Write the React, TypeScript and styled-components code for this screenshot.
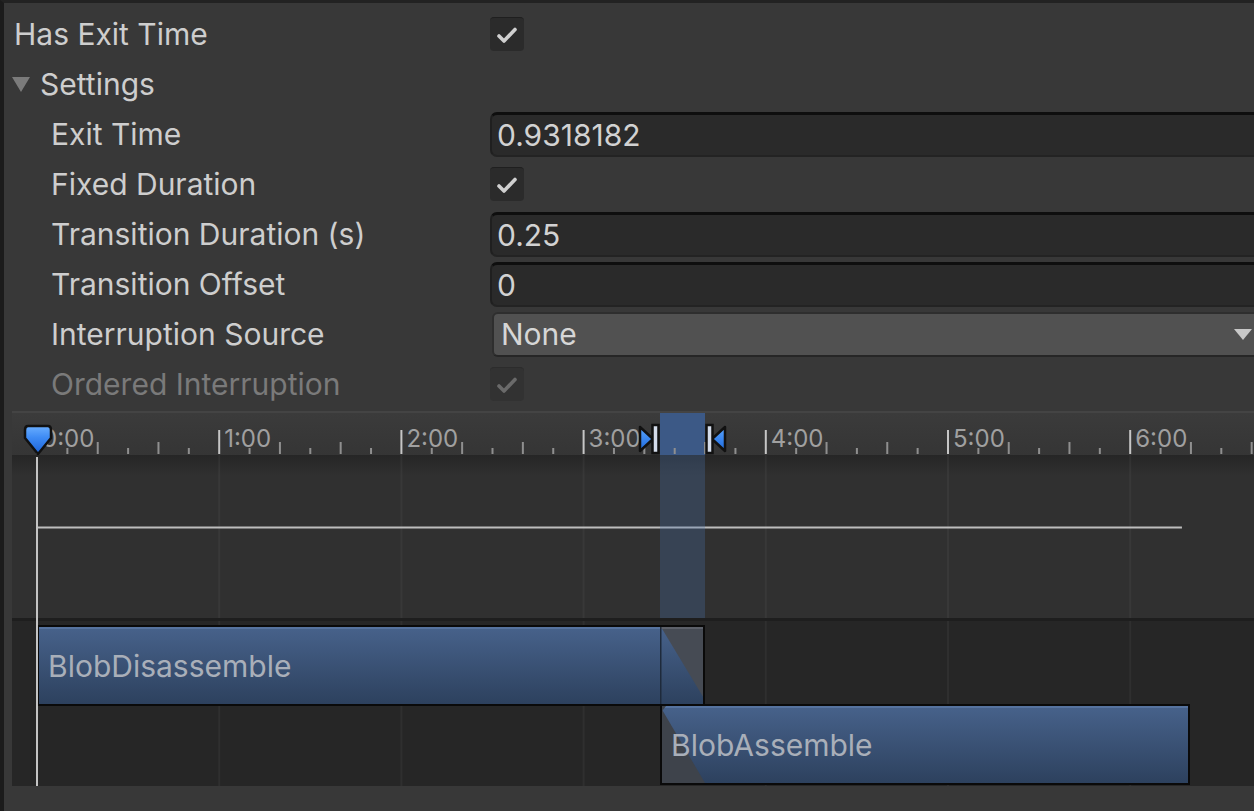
import React from 'react';
import styled, { createGlobalStyle } from 'styled-components';

const GlobalStyle = createGlobalStyle`
  html, body {
    margin: 0;
    padding: 0;
    background: #383838;
    overflow: hidden;
  }
  body {
    font-family: Inter, "Noto Sans", "Liberation Sans", sans-serif;
  }
`;

// Timeline scale: one ruler unit ("1:00") in pixels, and where 0:00 sits in the panel.
const UNIT = 182.2;
const ORIGIN = 25;
const toX = (t: number) => ORIGIN + t * UNIT;

const TRANSITION = { start: 3.42, end: 3.667 };

const CLIPS = [
    { name: 'BlobDisassemble', start: 0, end: 3.667, lane: 0 },
    { name: 'BlobAssemble', start: 3.42, end: 6.33, lane: 1 },
];

const CURVE_END = 6.284;
const MAJOR_TICKS = [0, 1, 2, 3, 4, 5, 6, 7];
const LABELS = [0, 1, 2, 3, 4, 5, 6];

const Window = styled.div`
    width: 1254px;
    height: 811px;
    box-sizing: border-box;
    border-top: 3px solid #222222;
    border-left: 4px solid #1b1b1b;
    background: #383838;
    overflow: hidden;
`;

const Content = styled.div`
    width: 1274px;
    padding-top: 6px;
`;

const Row = styled.div`
    height: 50px;
    display: grid;
    grid-template-columns: 486px 1fr;
    align-items: center;
`;

const Label = styled.div<{ $indent?: boolean; $disabled?: boolean }>`
    padding-left: ${(p) => (p.$indent ? '47px' : '10px')};
    font-size: 30px;
    line-height: 30px;
    color: ${(p) => (p.$disabled ? '#7a7a7a' : '#cecece')};
    white-space: nowrap;
`;

const Foldout = styled.div`
    display: flex;
    align-items: center;
    gap: 10px;
    padding-left: 8px;
    font-size: 30px;
    line-height: 30px;
    color: #cecece;
`;

const TextField = styled.div`
    height: 45px;
    box-sizing: border-box;
    display: flex;
    align-items: center;
    padding-left: 5px;
    background: #2a2a2a;
    border: 2px solid #1f1f1f;
    border-top: 3px solid #0e0e0e;
    border-bottom-color: #232323;
    border-radius: 7px;
    font-size: 30px;
    color: #d2d2d2;
`;

const Dropdown = styled.div`
    height: 45px;
    box-sizing: border-box;
    margin-left: 2px;
    display: flex;
    align-items: center;
    justify-content: space-between;
    padding: 0 24px 0 7px;
    background: #515151;
    border: 2px solid #2e2e2e;
    border-bottom-color: #262626;
    border-radius: 6px;
    font-size: 30px;
    color: #d6d6d6;
`;

const CheckBox = styled.div<{ $disabled?: boolean }>`
    width: 34px;
    height: 34px;
    box-sizing: border-box;
    border-radius: 4px;
    background: ${(p) => (p.$disabled ? '#323232' : '#2b2b2b')};
    border-top: 1px solid ${(p) => (p.$disabled ? '#2c2c2c' : '#1f1f1f')};
    display: flex;
    align-items: center;
    justify-content: center;
`;

const Timeline = styled.div`
    margin: 2px 0 0 8px;
    display: flex;
    flex-direction: column;
    position: relative;
    border-top: 2px solid #444444;
`;

const Ruler = styled.div`
    position: relative;
    height: 42px;
    background: linear-gradient(#3b3b3b, #353535);
`;

const CurveArea = styled.div`
    position: relative;
    height: 163px;
    background: linear-gradient(#262626, #303030 20px, #303030);
`;

const ClipArea = styled.div`
    position: relative;
    height: 168px;
    box-sizing: border-box;
    border-top: 3px solid #1e1e1e;
    background: #262626;
`;

const Layer = styled.svg`
    position: absolute;
    left: 0;
    top: 0;
`;

const TickLabel = styled.span`
    position: absolute;
    top: 14px;
    font-size: 24px;
    line-height: 23px;
    color: #a0a0a0;
`;

const RulerHighlight = styled.div`
    position: absolute;
    top: 0;
    bottom: 0;
    background: #3c5986;
`;

const CurveHighlight = styled.div`
    position: absolute;
    top: 0;
    bottom: 0;
    background: rgba(74, 112, 170, 0.3);
`;

const Marker = styled.svg`
    position: absolute;
    top: 10px;
`;

const PlayheadLine = styled.div`
    position: absolute;
    top: 44px;
    bottom: 0;
    width: 2px;
    background: #c4c4c4;
`;

const ClipBox = styled.div`
    position: absolute;
    height: 81px;
    box-sizing: border-box;
    border: 2px solid #0a0a0a;
    background: linear-gradient(#47628b, #2d415e);
    box-shadow: inset 0 2px 0 #56739f;
    overflow: hidden;
`;

const ClipName = styled.span`
    position: relative;
    z-index: 1;
    display: flex;
    align-items: center;
    height: 100%;
    padding-left: 9px;
    font-size: 30px;
    color: #a9afb9;
    white-space: nowrap;
`;

const Blend = styled.svg`
    position: absolute;
    top: 0;
`;

const Check: React.FC<{ disabled?: boolean }> = ({ disabled }) => (
    <svg width={34} height={34} viewBox='0 0 34 34'>
        <polyline points='9,18 14,23 25,11.5' fill='none'
            stroke={disabled ? '#6a6a6a' : '#d0d0d0'}
            strokeWidth={3.6} strokeLinecap='round' strokeLinejoin='round'
        />
    </svg>
);

const CheckField: React.FC<{ disabled?: boolean }> = ({ disabled }) => (
    <CheckBox $disabled={disabled}>
        <Check disabled={disabled} />
    </CheckBox>
);

const RulerTicks: React.FC = () => {
    const lines: React.ReactNode[] = [];
    MAJOR_TICKS.forEach((m) => {
        const x = toX(m);
        lines.push(<rect key={`M${m}`} x={x - 1} y={17} width={2} height={24} fill='#c6c6c6' />);
        for (let k = 1; k < 6; k++) {
            const sx = x + (k * UNIT) / 6;
            const h = k % 2 === 0 ? 12 : 6;
            lines.push(<rect key={`m${m}-${k}`} x={sx - 1} y={41 - h} width={2} height={h} fill='#8f8f8f' />);
        }
    });
    return (
        <Layer width={1300} height={42}>
            {lines}
        </Layer>
    );
};

const GridLines: React.FC<{ height: number; curve?: boolean }> = ({ height, curve }) => (
    <Layer width={1300} height={height}>
        {MAJOR_TICKS.slice(1).map((m) => (
            <rect key={m} x={toX(m) - 1} y={0} width={2} height={height} fill='rgba(255,255,255,0.045)' />
        ))}
        {curve && (
            <line x1={ORIGIN} y1={72.5} x2={toX(CURVE_END)} y2={72.5} stroke='#bdbdbd' strokeWidth={2} />
        )}
    </Layer>
);

const Playhead: React.FC = () => (
    <Marker width={32} height={34} viewBox='0 0 32 34' style={{ left: ORIGIN - 15, top: 10 }}>
        <defs>
            <linearGradient id='ph' x1='0' y1='0' x2='0' y2='1'>
                <stop offset='0' stopColor='#6aaeff' />
                <stop offset='0.4' stopColor='#3f8cf5' />
                <stop offset='1' stopColor='#1a62d6' />
            </linearGradient>
        </defs>
        <path d='M6 3 H26 Q29 3 29 7 V15 L16 31 L3 15 V7 Q3 3 6 3 Z'
            fill='url(#ph)' stroke='#111' strokeWidth={2.5} strokeLinejoin='round' />
    </Marker>
);

const TransitionMarker: React.FC<{ x: number; flip?: boolean }> = ({ x, flip }) => (
    <Marker width={24} height={32} viewBox='0 0 24 32'
        style={{ left: flip ? x - 1 : x - 23 }}>
        <defs>
            <linearGradient id='tm' x1='0' y1='0' x2='0' y2='1'>
                <stop offset='0' stopColor='#5aa5ff' />
                <stop offset='1' stopColor='#1c68dc' />
            </linearGradient>
        </defs>
        <g transform={flip ? 'translate(24 0) scale(-1 1)' : undefined}>
            <path d='M3 4 L16 16 L3 28 Z' fill='url(#tm)' stroke='#111' strokeWidth={2.5} strokeLinejoin='round' />
            <rect x={15.5} y={2} width={6} height={28} fill='#d4dcea' stroke='#111' strokeWidth={2.5} />
        </g>
    </Marker>
);

interface ClipProps {
    name: string;
    start: number;
    end: number;
    lane: number;
}

const Clip: React.FC<ClipProps> = ({ name, start, end, lane }) => {
    const left = toX(start);
    const width = toX(end) - left;
    const inner = 77;
    // Part of the clip that lies under the transition.
    const blendFrom = Math.max(start, TRANSITION.start);
    const blendTo = Math.min(end, TRANSITION.end);
    const bx = (blendFrom - start) * UNIT - 2;
    const bw = (blendTo - blendFrom) * UNIT;
    const outgoing = blendTo >= end - 0.001;

    return (
        <ClipBox style={{ left, width, top: lane === 0 ? 4 : 83 }}>
            {bw > 0 && (
                <Blend width={bw} height={inner} style={{ left: bx }}>
                    {outgoing ? (
                        <>
                            <polygon points={`1,0 ${bw},0 ${bw},${inner - 4}`} fill='#464b54' />
                            <rect x={0} y={0} width={bw} height={2} fill='#5c6069' />
                            <rect x={0} y={0} width={1.5} height={inner} fill='#1e2a3b' />
                        </>
                    ) : (
                        <>
                            <polygon points={`0,0 ${bw},${inner} 0,${inner}`} fill='#3e434b' />
                            <polygon points={`0,0 6,0 0,8`} fill='#3e434b' />
                        </>
                    )}
                </Blend>
            )}
            <ClipName>{name}</ClipName>
        </ClipBox>
    );
};

const App: React.FC = () => {
    const tx = toX(TRANSITION.start);
    const tw = toX(TRANSITION.end) - tx;

    return (
        <Window>
            <GlobalStyle />
            <Content>
                <Row>
                    <Label>{'Has Exit Time'}</Label>
                    <CheckField />
                </Row>
                <Row>
                    <Foldout>
                        <svg width={18} height={15} viewBox='0 0 18 15'>
                            <polygon points='0,0 18,0 9,15' fill='#7b7b7b' />
                        </svg>
                        {'Settings'}
                    </Foldout>
                </Row>
                <Row>
                    <Label $indent>{'Exit Time'}</Label>
                    <TextField>{'0.9318182'}</TextField>
                </Row>
                <Row>
                    <Label $indent>{'Fixed Duration'}</Label>
                    <CheckField />
                </Row>
                <Row>
                    <Label $indent>{'Transition Duration (s)'}</Label>
                    <TextField>{'0.25'}</TextField>
                </Row>
                <Row>
                    <Label $indent>{'Transition Offset'}</Label>
                    <TextField>{'0'}</TextField>
                </Row>
                <Row>
                    <Label $indent>{'Interruption Source'}</Label>
                    <Dropdown>
                        {'None'}
                        <svg width={18} height={11} viewBox='0 0 18 11'>
                            <polygon points='0,0 18,0 9,11' fill='#c8c8c8' />
                        </svg>
                    </Dropdown>
                </Row>
                <Row>
                    <Label $indent $disabled>{'Ordered Interruption'}</Label>
                    <CheckField disabled />
                </Row>

                <Timeline>
                    <Ruler>
                        <RulerHighlight style={{ left: tx, width: tw }} />
                        <RulerTicks />
                        {LABELS.map((m) => (
                            <TickLabel key={m} style={{ left: toX(m) + 5 }}>
                                {`${m}:00`}
                            </TickLabel>
                        ))}
                        <TransitionMarker x={tx} />
                        <TransitionMarker x={tx + tw} flip />
                        <Playhead />
                    </Ruler>
                    <CurveArea>
                        <GridLines height={163} curve />
                        <CurveHighlight style={{ left: tx, width: tw }} />
                    </CurveArea>
                    <ClipArea>
                        <GridLines height={165} />
                        {CLIPS.map((clip) => (
                            <Clip key={clip.name} {...clip} />
                        ))}
                    </ClipArea>
                    <PlayheadLine style={{ left: ORIGIN - 1 }} />
                </Timeline>
            </Content>
        </Window>
    );
};

export default App;
